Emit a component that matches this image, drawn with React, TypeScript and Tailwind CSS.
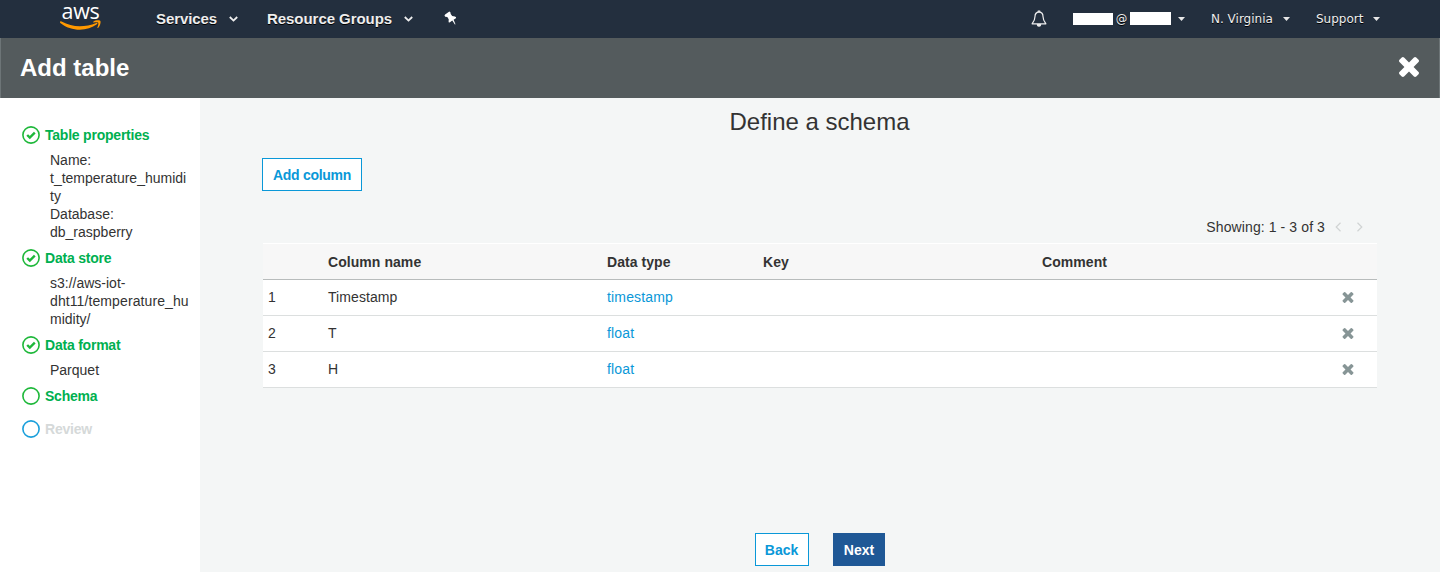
import React from "react";

const STEPS = [
  {
    title: "Table properties",
    done: true,
    lines: ["Name:", "t_temperature_humidi", "ty", "Database:", "db_raspberry"],
  },
  { title: "Data store", done: true, lines: ["s3://aws-iot-", "dht11/temperature_hu", "midity/"] },
  { title: "Data format", done: true, lines: ["Parquet"] },
  { title: "Schema", done: false, lines: [] as string[] },
];

const ROWS = [
  { name: "Timestamp", type: "timestamp" },
  { name: "T", type: "float" },
  { name: "H", type: "float" },
];

function Cross({ className }: { className: string }) {
  return (
    <svg className={className} viewBox="302 366 1188 1188" fill="currentColor">
      <path d="M1490 1322q0 40-28 68l-136 136q-28 28-68 28t-68-28l-294-294-294 294q-28 28-68 28t-68-28l-136-136q-28-28-28-68t28-68l294-294-294-294q-28-28-28-68t28-68l136-136q28-28 68-28t68 28l294 294 294-294q28-28 68-28t68 28l136 136q28 28 28 68t-28 68l-294 294 294 294q28 28 28 68z" />
    </svg>
  );
}

function StepIcon({ done, className }: { done?: boolean; className: string }) {
  return (
    <svg className={"h-[18px] w-[18px] shrink-0 " + className} viewBox="0 0 18 18" fill="none" stroke="currentColor">
      <circle cx="9" cy="9" r="8.1" strokeWidth="1.6" />
      {done && <path d="M5.2 9l2.6 2.6 5-5" strokeWidth="2.4" />}
    </svg>
  );
}

function Chevron({ className }: { className: string }) {
  return (
    <svg className={className} viewBox="0 0 9 6" fill="none" stroke="#eee" strokeWidth="1.8">
      <path d="M.8 1l3.7 3.600L8.200 1" />
    </svg>
  );
}

function Caret() {
  return (
    <svg className="ml-[7px] h-1 w-[7px]" viewBox="0 0 7 4" fill="#e8e8e8">
      <path d="M0 0h7L3.5 4z" />
    </svg>
  );
}

function Logo() {
  return (
    <div className="ml-[59px] flex h-[38px] w-[43px] flex-col items-center">
      <span className="h-[20px] font-['Open_Sans',sans-serif] text-[21.5px] leading-[22px] font-medium tracking-[-0.3px] text-white [text-shadow:none]">
        aws
      </span>
      <svg className="h-[10px] w-[43px]" viewBox="0 0 43 10" fill="#f90">
        <path d="M1.1 1.800C1.500 1.100 1.900 1.200 2.500 1.500 13.500 7.500 25.500 7.500 37.300 2.900c1-.3 1.500.7.6 1.400C28 11.800 12 11.600 1.300 2.900 1 2.500.9 2.200 1.100 1.800z" />
        <path d="M34.300 1.700c1.800-1.500 5.200-1.700 6.900-1 .9.600.2 5.200-2.100 7.200-.5.300-.9.100-.7-.5.700-1.600 1.300-4 .8-4.700-.5-.6-3-.4-4.400-.2-.6.1-1-.400-.5-.8z" />
      </svg>
    </div>
  );
}

export default function App() {
  return (
    <div className="flex h-[572px] w-[1440px] flex-col overflow-hidden bg-[#f4f6f6] font-['Liberation_Sans',Arial,sans-serif] text-sm leading-[18px] text-[#333]">
      <nav className="flex h-[38px] shrink-0 items-center bg-[#232f3e] text-[#eee] [text-shadow:0_1px_0_#000]">
        <Logo />
        <span className="ml-[54px] w-[61px] text-[15px] font-bold tracking-[-0.1px] whitespace-nowrap">Services</span>
        <Chevron className="ml-3 h-[6px] w-[9px]" />
        <span className="ml-[29px] w-[125px] text-[15px] font-bold tracking-[-0.05px] whitespace-nowrap">Resource Groups</span>
        <Chevron className="ml-3 h-[6px] w-[9px]" />
        <svg className="mb-[2px] ml-[31px] h-[15px] w-[13px]" viewBox="0 0 13 15" fill="#fff">
          <path d="M4.300 1.200l1-.6 1.100.6.3 1.900 1.500 1.800 2.700.5 1.200.900-.2 1-2.300 1.400 1.900 4.600-.6.300-2.600-4.100-2.700 2-1-.2.100-3.100L3.300 5.900 1.200 5.700.5 4.600l.6-1.100z" />
        </svg>
        <svg className="ml-auto h-[18px] w-[16px]" viewBox="0 0 16 18" fill="none" stroke="#eee" strokeWidth="1.200" strokeLinejoin="round">
          <path d="M8 2.200C5.200 2.200 4 4.200 4 6.600c0 4-1.200 5.300-2.900 7.200h13.800C13.200 11.900 12 10.600 12 6.600c0-2.400-1.200-4.400-4-4.400z" />
          <path d="M7.200 2V1h1.600v1" />
          <path d="M6.300 14.500c.2 2.200 3.200 2.200 3.400 0z" fill="#eee" />
        </svg>
        <div className="mr-[60px] ml-[26px] flex items-center font-['DejaVu_Sans',sans-serif] text-[12px] whitespace-nowrap">
          <span className="h-3 w-10 bg-white" />
          <span className="w-[17px] text-center text-[11.5px]">@</span>
          <span className="mb-px h-[13px] w-[41px] bg-white" />
          <Caret />
          <span className="ml-[26px] w-[65px]">N. Virginia</span>
          <Caret />
          <span className="ml-[26px] w-[50px]">Support</span>
          <Caret />
        </div>
      </nav>

      <header className="flex h-[60px] shrink-0 items-center justify-between border-x border-[#6d7577] bg-[#545b5d] pr-[20px] pl-[19px] text-white">
        <h1 className="text-2xl leading-[30px] font-bold">Add table</h1>
        <Cross className="mb-[2px] h-[20px] w-[20px]" />
      </header>

      <div className="flex min-h-0 flex-1">
        <aside className="w-[200px] shrink-0 bg-white pt-5 pl-[22px]">
          {STEPS.map((s) => (
            <section key={s.title} className="mt-2">
              <h2 className="mb-[7px] flex items-center gap-[5px] font-bold tracking-[-0.22px] text-[#00b050]">
                <StepIcon done={s.done} className="text-[#1eb83a]" />
                {s.title}
              </h2>
              <div className="pl-7 whitespace-nowrap">
                {s.lines.map((l) => (
                  <p key={l} className={l.startsWith("dht") ? "tracking-[0.1px]" : ""}>
                    {l}
                  </p>
                ))}
              </div>
            </section>
          ))}
          <h2 className="mt-[15px] flex items-center gap-[5px] font-bold tracking-[-0.22px] text-[#d5d9d9]">
            <StepIcon className="text-[#1a9fdb]" />
            Review
          </h2>
        </aside>

        <main className="flex flex-1 flex-col pr-[63px] pb-[6px] pl-[62px]">
          <h2 className="mt-2 text-center text-2xl leading-8">Define a schema</h2>
          <button className="mt-5 h-[33px] w-[100px] border border-[#0a98d8] bg-white font-bold tracking-[-0.3px] whitespace-nowrap text-[#0a98d8]">
            Add column
          </button>
          <div className="mt-[27px] flex h-[18px] items-center justify-end pr-[14px]">
            <span className="tracking-[0.1px]">Showing: 1 - 3 of 3</span>
            <svg className="ml-[10px] h-[10px] w-[28px]" viewBox="0 0 28 10" fill="none" stroke="#d0d3d3" strokeWidth="1.200">
              <path d="M5.500.8L1.200 5l4.300 4.200M22.500.8L26.800 5l-4.300 4.200" />
            </svg>
          </div>
          <table className="mt-[7px] ml-px w-[1114px] table-fixed border-separate border-spacing-0 text-left">
            <colgroup>
              <col className="w-[60px]" />
              <col className="w-[279px]" />
              <col className="w-[156px]" />
              <col className="w-[279px]" />
              <col className="w-[279px]" />
              <col className="w-[61px]" />
            </colgroup>
            <thead>
              <tr className="h-[37px] bg-[#f7f7f7]">
                {["", "Column name", "Data type", "Key", "Comment", ""].map((h, i) => (
                  <th key={i} className="border-t border-b border-t-white border-b-[#b8bcbc] px-[5px] py-0 tracking-[0.06px]">
                    {h}
                  </th>
                ))}
              </tr>
            </thead>
            <tbody>
              {ROWS.map((r, i) => (
                <tr key={r.name} className="h-9 bg-white [&>td]:border-b [&>td]:border-[#dcdfdf] [&>td]:px-[5px] [&>td]:pt-0 [&>td]:pb-[2px]">
                  <td>{i + 1}</td>
                  <td className="tracking-[0.08px]">{r.name}</td>
                  <td className="tracking-[0.16px] text-[#0a98d8]">{r.type}</td>
                  <td />
                  <td />
                  <td>
                    <Cross className="mt-[2px] ml-[21px] h-[11px] w-[12px] text-[#879596]" />
                  </td>
                </tr>
              ))}
            </tbody>
          </table>
          <div className="mt-auto flex justify-center gap-6">
            <button className="h-[33px] w-[54px] border border-[#0a98d8] bg-white font-bold text-[#0a98d8]">Back</button>
            <button className="h-[33px] w-[52px] bg-[#1f5896] pl-px font-bold text-white">Next</button>
          </div>
        </main>
      </div>
    </div>
  );
}
